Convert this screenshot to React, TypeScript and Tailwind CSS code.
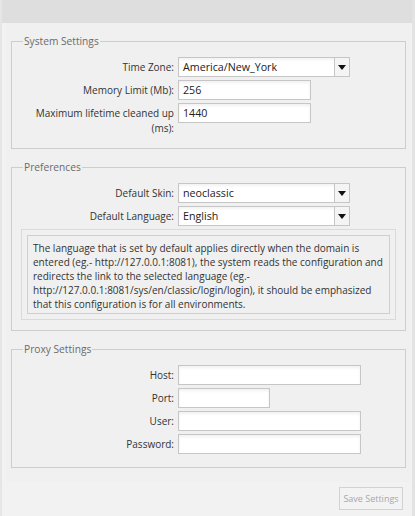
import React from 'react';

const font = { fontFamily: '"Open Sans", "Liberation Sans", sans-serif' };

const Caret: React.FC = () => (
  <svg width="8" height="5" viewBox="0 0 8 5">
    <path d="M0 0 H8 L4 5 Z" fill="#111" />
  </svg>
);

const TextInput: React.FC<{ value?: string; width: string }> = ({ value = '', width }) => (
  <input
    type="text"
    defaultValue={value}
    className={`${width} h-[20px] border border-[#c6c6c6] bg-white px-[4px] text-[10.7px] text-[#222] shadow-[inset_0_2px_3px_rgba(0,0,0,0.06)] outline-none`}
  />
);

const Select: React.FC<{ value: string }> = ({ value }) => (
  <div className="flex h-[20px] w-[172px] border border-[#c6c6c6] bg-white shadow-[inset_0_2px_3px_rgba(0,0,0,0.05)]">
    <span className="flex-1 px-[4px] text-[10.7px] leading-[18px] text-[#222]">{value}</span>
    <span className="flex w-[15px] items-center justify-center border-l border-[#c6c6c6] bg-[#f4f4f4]">
      <Caret />
    </span>
  </div>
);

const Row: React.FC<{ label: string; children: React.ReactNode }> = ({ label, children }) => (
  <div className="flex items-start gap-[4px]">
    <label className="w-[152px] shrink-0 pt-[3px] text-right text-[10px] leading-[15px] text-[#333]">{label}</label>
    {children}
  </div>
);

const Section: React.FC<{ title: string; children: React.ReactNode; className?: string }> = ({ title, children, className = '' }) => (
  <fieldset className={`border border-[#cdcdcd] px-[10px] pt-[8px] ${className}`}>
    <legend className="ml-[1px] px-[1px] text-[10.2px] leading-[16px] text-[#6b6b6b]">{title}</legend>
    {children}
  </fieldset>
);

export default function App() {
  return (
    <div style={font} className="flex h-[516px] w-[415px] flex-col overflow-hidden border-l-2 border-r-[3px] border-l-[#e6e6e6] border-r-[#e3e3e3] bg-[#f2f2f2]">
      <div className="-ml-[2px] -mr-[3px] h-[23px] shrink-0 bg-[#dedede]" />
      <div className="ml-[4px] mr-[1px] bg-[#f0f0f0] px-[5px] pb-[14px] pt-[10px]">
        <Section title="System Settings" className="pb-[12px]">
          <div className="flex flex-col gap-[3px]">
            <Row label="Time Zone:">
              <Select value="America/New_York" />
            </Row>
            <Row label="Memory Limit (Mb):">
              <TextInput value="256" width="w-[133px]" />
            </Row>
            <Row label="Maximum lifetime cleaned up (ms):">
              <TextInput value="1440" width="w-[133px]" />
            </Row>
          </div>
        </Section>

        <Section title="Preferences" className="mt-[10px] pb-[10px]">
          <div className="flex flex-col gap-[3px]">
            <Row label="Default Skin:">
              <Select value="neoclassic" />
            </Row>
            <Row label="Default Language:">
              <Select value="English" />
            </Row>
            <div className="-mx-[1px] border border-[#dadada] p-[5px]">
              <p className="border border-[#cfcfcf] px-[5px] pb-[2px] pt-[5px] text-[10px] leading-[14px] text-[#333]">
                The language that is set by default applies directly when the domain is entered (eg.- http://127.0.0.1:8081), the system reads the configuration and redirects the link to the selected language (eg.- http://127.0.0.1:8081/sys/en/classic/login/login), it should be emphasized that this configuration is for all environments.
              </p>
            </div>
          </div>
        </Section>

        <Section title="Proxy Settings" className="mt-[10px] pb-[13px]">
          <div className="flex flex-col gap-[3px]">
            <Row label="Host:">
              <TextInput width="w-[183px]" />
            </Row>
            <Row label="Port:">
              <TextInput width="w-[92px]" />
            </Row>
            <Row label="User:">
              <TextInput width="w-[183px]" />
            </Row>
            <Row label="Password:">
              <TextInput width="w-[183px]" />
            </Row>
          </div>
        </Section>
      </div>
      <div className="flex justify-end pr-[9px] pt-[5px]">
        <button className="h-[23px] w-[64px] border border-[#d2d2d2] bg-[#f3f3f3] text-[9px] text-[#a8a8a8]">Save Settings</button>
      </div>
    </div>
  );
}
